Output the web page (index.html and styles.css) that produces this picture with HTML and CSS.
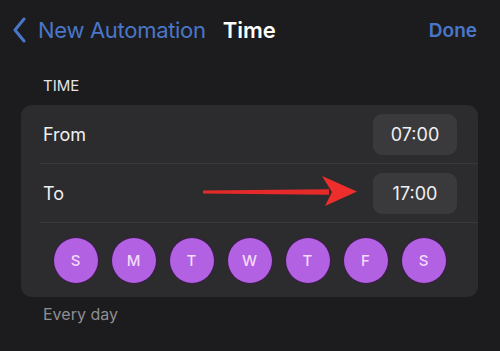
FILE: index.html
```html
<!DOCTYPE html>
<html>
<head>
<meta charset="utf-8">
<link rel="stylesheet" href="styles.css">
</head>
<body>
<div class="screen">
  <header class="nav">
    <div class="nav-back">
      <svg class="chevron" width="14" height="26" viewBox="0 0 14 26"><path d="M12 2 L3 13 L12 24" fill="none" stroke="#4a76c9" stroke-width="3" stroke-linecap="round" stroke-linejoin="round"/></svg>
      <span class="back-label">New Automation</span>
    </div>
    <div class="nav-title">Time</div>
    <div class="nav-done">Done</div>
  </header>

  <div class="section-label">TIME</div>

  <div class="card">
    <div class="row">
      <span class="row-label">From</span>
      <span class="pill">07:00</span>
    </div>
    <div class="row">
      <span class="row-label">To</span>
      <span class="pill">17:00</span>
    </div>
    <div class="days">
      <span class="day">S</span>
      <span class="day">M</span>
      <span class="day">T</span>
      <span class="day">W</span>
      <span class="day">T</span>
      <span class="day">F</span>
      <span class="day">S</span>
    </div>
  </div>

  <div class="footer-note">Every day</div>

  <svg class="annot-arrow" width="164" height="40" viewBox="0 0 164 40">
    <path d="M2 16.6 L128 15.2 L128 20.8 L2 19.4 Z" fill="#e62a2a"/>
    <path d="M121 2 L156 17.5 L124 32 L131 18 Z" fill="#ee2e2c"/>
  </svg>
</div>
</body>
</html>
```

FILE: styles.css
```css
html, body {
  margin: 0;
  padding: 0;
  background: #1c1c1e;
}
.screen {
  position: relative;
  width: 500px;
  height: 351px;
  overflow: hidden;
  font-family: "Inter", "Roboto", "Liberation Sans", sans-serif;
  color: #f2f2f4;
}
.nav {
  display: flex;
  align-items: center;
  height: 60px;
  padding: 0 23px 0 12px;
}
.nav-back {
  display: flex;
  align-items: center;
  gap: 12px;
}
.chevron { display: block; }
.back-label {
  font-size: 22px;
  color: #4a76c9;
  letter-spacing: -0.3px;
}
.nav-title {
  margin-left: 17px;
  font-size: 22px;
  font-weight: 600;
  color: #ffffff;
}
.nav-done {
  margin-left: auto;
  font-size: 19px;
  font-weight: 600;
  color: #4a76c9;
}
.section-label {
  padding: 17px 0 0 43px;
  height: 28px;
  box-sizing: border-box;
  font-size: 15px;
  color: #e4e4e6;
  line-height: 18px;
}
.card {
  margin: 17px 22px 0 21px;
  background: #2c2c2e;
  border-radius: 11px;
}
.row {
  display: flex;
  align-items: center;
  justify-content: space-between;
  height: 58px;
  margin-left: 19px;
  padding: 0 21px 0 3px;
  border-bottom: 1px solid #38383a;
}
.row-label {
  font-size: 18px;
  color: #f0f0f2;
}
.pill {
  display: flex;
  align-items: center;
  justify-content: center;
  width: 84px;
  height: 41px;
  border-radius: 9px;
  background: #3a3a3c;
  font-size: 18px;
  color: #f0f0f2;
}
.days {
  display: flex;
  justify-content: center;
  gap: 14px;
  padding: 15px 0 14px;
}
.day {
  display: flex;
  align-items: center;
  justify-content: center;
  width: 44px;
  height: 45px;
  border-radius: 50%;
  background: #b161e2;
  box-shadow: 0 0 0 1px rgba(70, 20, 90, 0.7);
  font-size: 15px;
  font-weight: 500;
  color: #f4d9f8;
}
.footer-note {
  padding: 7px 0 0 43px;
  font-size: 16px;
  color: #8e8e93;
}
.annot-arrow {
  position: absolute;
  left: 201px;
  top: 174px;
}
```
